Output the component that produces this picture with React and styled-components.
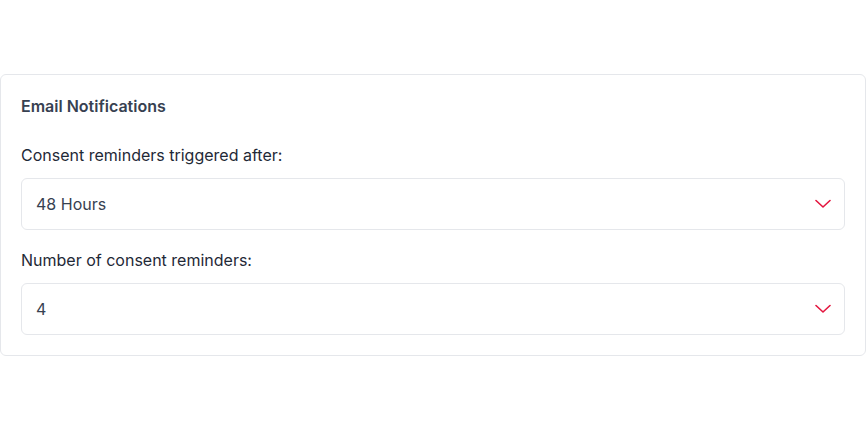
import React from "react";
import styled, { createGlobalStyle } from "styled-components";

const GlobalStyle = createGlobalStyle`
  body {
    margin: 0;
    background: #ffffff;
    font-family: Inter, "Noto Sans", sans-serif;
  }
`;

function Chevron() {
    return (
        <svg width="16" height="10" viewBox="0 0 16 10" fill="none">
            <polyline points="1,1.5 8,8 15,1.5" stroke="#e4163f" strokeWidth="1.6" strokeLinecap="round" strokeLinejoin="round" />
        </svg>
    )
}

function SelectField({ label, value, first }) {
    return (
        <Field first={first}>
            <Label>{label}</Label>
            <SelectBox>
                <SelectValue>{value}</SelectValue>
                <Chevron />
            </SelectBox>
        </Field>
    )
}

function App() {
    return (
        <>
            <GlobalStyle />
            <Page>
                <Card>
                    <Title>Email Notifications</Title>
                    <SelectField first label="Consent reminders triggered after:" value="48 Hours" />
                    <SelectField label="Number of consent reminders:" value="4" />
                </Card>
            </Page>
        </>
    )
}

const Page = styled.div`
    padding-top: 74px;
`;

const Card = styled.div`
    width: 866px;
    box-sizing: border-box;
    border: 1px solid #e5e7eb;
    border-radius: 6px;
    padding: 20px;
`;

const Title = styled.div`
    font-size: 16px;
    line-height: 22px;
    font-weight: 600;
    color: #374151;
`;

const Field = styled.div`
    margin-top: ${props => props.first ? "26px" : "18px"};
`;

const Label = styled.div`
    font-size: 16px;
    line-height: 24px;
    color: #1f2937;
    margin-bottom: 11px;
`;

const SelectBox = styled.div`
    display: flex;
    align-items: center;
    justify-content: space-between;
    height: 52px;
    box-sizing: border-box;
    border: 1px solid #e5e7eb;
    border-radius: 6px;
    padding: 0 13px 0 14px;
`;

const SelectValue = styled.span`
    font-size: 16px;
    color: #374151;
`;

export default App;
